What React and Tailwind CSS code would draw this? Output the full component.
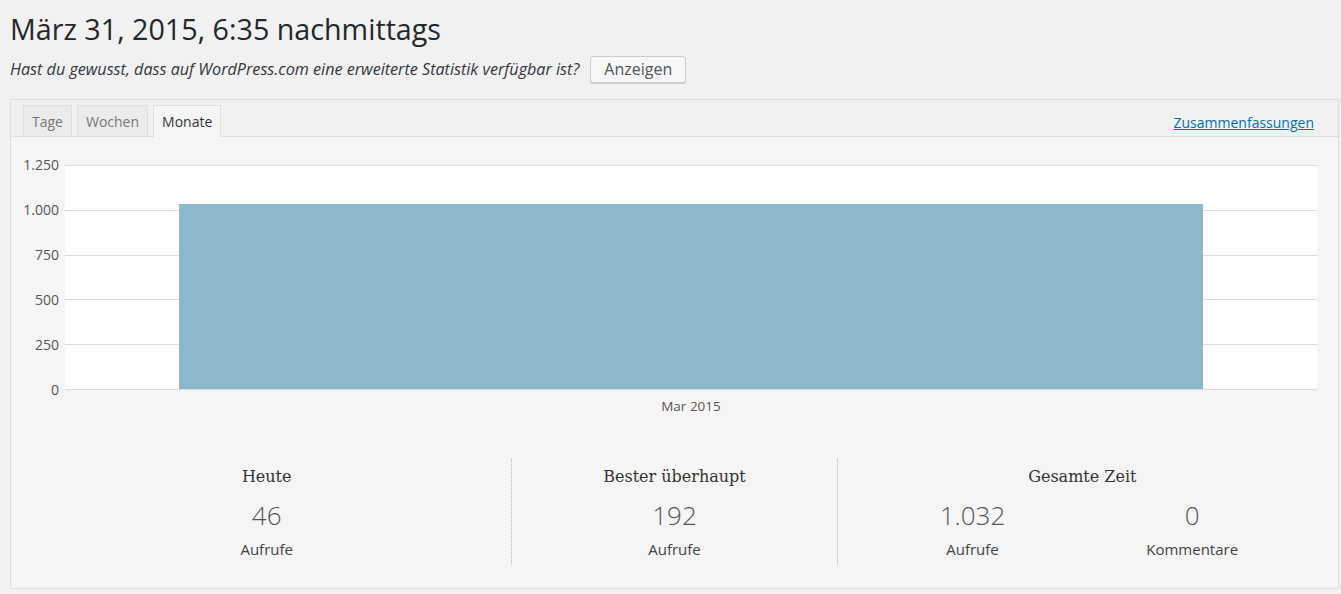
import React from 'react';

const ticks = ['1.250', '1.000', '750', '500', '250', '0'];

const Stat = ({ value, label }) => (
  <div className="flex flex-col items-center">
    <div className="text-[26px] font-light leading-[30px] text-[#555] mt-[11px]">{value}</div>
    <div className="text-[15px] leading-[20px] text-[#444] mt-[9px]">{label}</div>
  </div>
);

const App = () => {
  return (
    <div className="min-h-[594px] bg-[#f1f1f1] font-['Open_Sans',sans-serif] text-[#444] pt-[10px]">
      <div className="pl-[10px] pr-[2px]">
        <h1 className="text-[28.7px] leading-[38px] text-[#23282d] font-normal">März 31, 2015, 6:35 nachmittags</h1>
        <div className="flex items-center gap-[11px] mt-[8px]">
          <p className="italic text-[16.15px] text-[#32373c]">Hast du gewusst, dass auf WordPress.com eine erweiterte Statistik verfügbar ist?</p>
          <button className="h-[27px] px-[13px] text-[16px] leading-[25px] text-[#555] bg-[#f7f7f7] border border-[#ccc] rounded-[3px] shadow-[0_1px_0_#ccc]">Anzeigen</button>
        </div>

        <div className="mt-[16px] border border-[#dedede] bg-[#f5f5f5] h-[490px]">
          <div className="flex items-end justify-between h-[37px] bg-[#f1f1f1] border-b border-[#dedede] pl-[12px] pr-[24px]">
            <div className="flex gap-[5px] -mb-px">
              <div className="h-[31px] px-[8px] text-[14px] leading-[32px] text-[#777] bg-[#ebebeb] border border-b-0 border-[#dedede]">Tage</div>
              <div className="h-[31px] px-[8px] text-[14px] leading-[32px] text-[#777] bg-[#ebebeb] border border-b-0 border-[#dedede]">Wochen</div>
              <div className="h-[32px] px-[8px] text-[14px] leading-[32px] text-[#32373c] bg-[#f5f5f5] border border-b-0 border-[#dedede]">Monate</div>
            </div>
            <a href="#" className="text-[14px] leading-[20px] mb-[3px] text-[#0073aa] underline">Zusammenfassungen</a>
          </div>

          <div className="px-[11px] pt-[28px]">
            <div className="flex items-start">
              <div className="w-[37px] h-[243px] -my-[9px] flex flex-col justify-between items-end text-[14px] text-[#555]">
                {ticks.map((t) => (
                  <div key={t} className="leading-[18px]">{t}</div>
                ))}
              </div>
              <div className="ml-[6px] w-[1252px] h-[225px] bg-white">
                <svg width="1252" height="225" viewBox="0 0 1252 225">
                  {[0, 1, 2, 3, 4].map((i) => (
                    <line key={i} x1="0" x2="1252" y1={Math.round(i * 44.8) + 0.5} y2={Math.round(i * 44.8) + 0.5} stroke="#dcdcdc" strokeWidth="1" />
                  ))}
                  <rect x="114" y="39" width="1024" height="185" fill="#8cb7cc" />
                  <line x1="0" x2="1252" y1="224.5" y2="224.5" stroke="#dcdcdc" strokeWidth="1" />
                </svg>
              </div>
            </div>
            <div className="ml-[43px] w-[1252px] text-center text-[13.5px] leading-[18px] text-[#555] mt-[7px]">Mar 2015</div>

            <div className="flex mt-[44px]">
              <div className="w-[37.5%] flex flex-col items-center">
                <h3 className="font-['DejaVu_Serif',serif] text-[16px] leading-[24px] text-[#333] mt-[6px]">Heute</h3>
                <Stat value="46" label="Aufrufe" />
              </div>
              <div className="w-[25%] flex flex-col items-center border-l border-r border-dotted border-[#bbb] h-[106px]">
                <h3 className="font-['DejaVu_Serif',serif] text-[16px] leading-[24px] text-[#333] mt-[6px]">Bester überhaupt</h3>
                <Stat value="192" label="Aufrufe" />
              </div>
              <div className="w-[37.5%] flex flex-col items-center px-[25px]">
                <h3 className="font-['DejaVu_Serif',serif] text-[16px] leading-[24px] text-[#333] mt-[6px]">Gesamte Zeit</h3>
                <div className="grid grid-cols-2 w-full">
                  <Stat value="1.032" label="Aufrufe" />
                  <Stat value="0" label="Kommentare" />
                </div>
              </div>
            </div>
          </div>
        </div>
      </div>
    </div>
  );
};

export default App;
